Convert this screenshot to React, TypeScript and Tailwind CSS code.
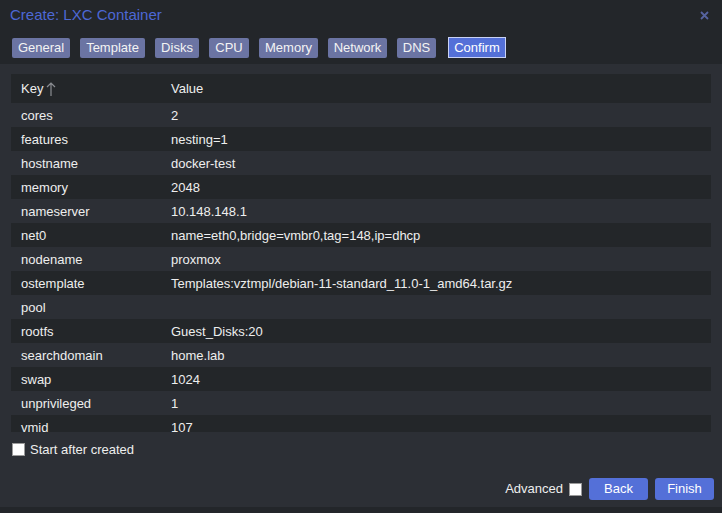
import React from "react";

const rows: [string, string][] = [
  ["cores", "2"],
  ["features", "nesting=1"],
  ["hostname", "docker-test"],
  ["memory", "2048"],
  ["nameserver", "10.148.148.1"],
  ["net0", "name=eth0,bridge=vmbr0,tag=148,ip=dhcp"],
  ["nodename", "proxmox"],
  ["ostemplate", "Templates:vztmpl/debian-11-standard_11.0-1_amd64.tar.gz"],
  ["pool", ""],
  ["rootfs", "Guest_Disks:20"],
  ["searchdomain", "home.lab"],
  ["swap", "1024"],
  ["unprivileged", "1"],
  ["vmid", "107"],
];

const tabs: { t: string; w: string }[] = [
  { t: "General", w: "w-[58px]" },
  { t: "Template", w: "w-[65px]" },
  { t: "Disks", w: "w-[44px]" },
  { t: "CPU", w: "w-[40px]" },
  { t: "Memory", w: "w-[59px]" },
  { t: "Network", w: "w-[59px]" },
  { t: "DNS", w: "w-[39px]" },
];

export default function App() {
  return (
    <div
      className="w-[722px] h-[513px] bg-[#2c2f35] flex flex-col text-[13px] text-[#eeeeee] overflow-hidden"
      style={{ fontFamily: '"Liberation Sans", Arial, sans-serif' }}
    >
      <div className="h-[64px] bg-[#23262a] flex flex-col shrink-0">
        <div className="h-[30px] flex items-center justify-between pl-[10px] pr-[12px]">
          <span className="text-[15px] text-[#4d68d4]">Create: LXC Container</span>
          <svg width="9" height="9" viewBox="0 0 9 9" className="mr-[1px]">
            <path d="M1 1L8 8M8 1L1 8" stroke="#56639f" strokeWidth="1.8" />
          </svg>
        </div>
        <div className="flex items-center gap-[10px] pl-[12px] pt-[7px]">
          {tabs.map(({ t, w }) => (
            <div
              key={t}
              className={`${w} h-[20px] flex items-center justify-center bg-[#6b74a3] rounded-[2px] text-[#f3f3f3]`}
            >
              {t}
            </div>
          ))}
          <div className="w-[58px] h-[21px] flex items-center justify-center bg-[#5470d8] border border-[#c9d2f5] text-white ml-[2px]">
            Confirm
          </div>
        </div>
      </div>
      <div className="flex-1 flex flex-col pt-[10px] pl-[11px] pr-[11px]">
        <div className="h-[358px] overflow-hidden w-[700px]">
          <div className="h-[29px] bg-[#232629] flex items-center">
            <div className="w-[150px] pl-[10px] flex items-center gap-[3px]">
              Key
              <svg width="10" height="14" viewBox="0 0 10 14">
                <path d="M5 1V14M1 5L5 1L9 5" stroke="#8a8d92" strokeWidth="1.2" fill="none" />
              </svg>
            </div>
            <div className="pl-[10px]">Value</div>
          </div>
          {rows.map(([k, v], i) => (
            <div
              key={k}
              className={`h-[24px] flex items-center pt-[1px] ${i % 2 === 1 ? "bg-[#232629]" : ""}`}
            >
              <div className="w-[150px] pl-[10px]">{k}</div>
              <div className="pl-[10px]">{v}</div>
            </div>
          ))}
        </div>
        <div className="flex items-center gap-[5px] mt-[8px] pl-[1px]">
          <div className="w-[13px] h-[13px] bg-white border border-[#9a9a9a]" />
          <span>Start after created</span>
        </div>
        <div className="flex-1" />
        <div className="flex items-center justify-end gap-[7px] mb-[7px] -mr-[3px]">
          <span className="mr-[-1px]">Advanced</span>
          <div className="w-[13px] h-[13px] bg-white border border-[#9a9a9a]" />
          <div className="w-[59px] h-[22px] rounded-[3px] bg-[#5470d8] flex items-center justify-center text-white">
            Back
          </div>
          <div className="w-[59px] h-[22px] rounded-[3px] bg-[#5470d8] flex items-center justify-center text-white">
            Finish
          </div>
        </div>
      </div>
      <div className="h-[6px] bg-[#23262a] shrink-0" />
    </div>
  );
}
